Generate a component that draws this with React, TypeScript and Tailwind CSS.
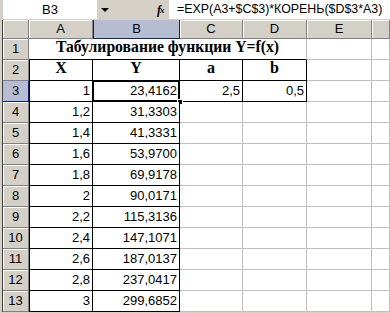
import React from 'react';

const rows: [string, string][] = [
  ['1', '23,4162'],
  ['1,2', '31,3303'],
  ['1,4', '41,3331'],
  ['1,6', '53,9700'],
  ['1,8', '69,9178'],
  ['2', '90,0171'],
  ['2,2', '115,3136'],
  ['2,4', '147,1071'],
  ['2,6', '187,0137'],
  ['2,8', '237,0417'],
  ['3', '299,6852'],
];

const sans = { fontFamily: '"Liberation Sans", Arial, sans-serif' };
const serif = { fontFamily: '"Liberation Serif", "Times New Roman", serif' };

const hdr = 'flex items-center justify-center bg-[#d4d0c8] border-r border-b border-[#808080] shadow-[inset_1px_1px_0_#fff] text-[13px] text-black';
const hdrSel = 'flex items-center justify-center bg-[#b6bdd2] border-r border-b border-[#0a246a] text-[13px] text-black';
const grid = 'border-r border-b border-[#c0c0c0] bg-white';
const num = 'flex items-end justify-end pr-[2px] pb-[1px] text-[13px] text-black bg-white';

export default function App() {
  return (
    <div className="w-[390px] h-[313px] overflow-hidden bg-[#d4d0c8]" style={sans}>
      {/* formula bar */}
      <div className="flex h-[20px] items-stretch pb-px">
        <div className="ml-[3px] w-[94px] bg-white flex items-center justify-center text-[13px]">B3</div>
        <div className="w-[15px] flex items-center justify-center">
          <span className="block w-0 h-0 border-l-[4px] border-r-[4px] border-t-[4px] border-l-transparent border-r-transparent border-t-black" />
        </div>
        <div className="w-[45px]" />
        <div className="w-[12px] flex items-center text-[12px] font-bold italic" style={serif}>
          f<span className="text-[9px] -ml-px mt-[3px]">x</span>
        </div>
        <div className="flex-1 bg-white flex items-center pl-[8px] text-[12.4px] whitespace-nowrap">
          =EXP(A3+$C$3)*КОРЕНЬ($D$3*A3)
        </div>
      </div>

      {/* sheet */}
      <div className="ml-[2px] border-l border-[#404040] grid grid-cols-[26px_64px_87px_63px_64px_65px_1fr] grid-rows-[19px_repeat(13,21px)] bg-white">
        {/* column headers */}
        <div className={hdr} />
        <div className={hdr}>A</div>
        <div className={hdrSel + ' border-l'}>B</div>
        <div className={hdr}>C</div>
        <div className={hdr}>D</div>
        <div className={hdr}>E</div>
        <div className={hdr} />

        {/* row 1 */}
        <div className={hdr}>1</div>
        <div className="col-span-4 flex items-end justify-center pb-0 border-b border-black border-r border-r-[#c0c0c0] bg-white text-[15.7px] font-bold whitespace-nowrap" style={serif}>
          Табулирование функции Y=f(x)
        </div>
        <div className={grid} />
        <div className={grid} />

        {/* row 2 */}
        <div className={hdr}>2</div>
        {['X', 'Y', 'a', 'b'].map((t, i) => (
          <div
            key={t}
            className={'flex items-end justify-center pb-0 border-r border-b border-black bg-white text-[16px] font-bold' + (i === 0 ? ' border-l' : '')}
            style={serif}
          >
            {t}
          </div>
        ))}
        <div className={grid} />
        <div className={grid} />

        {/* rows 3-13 */}
        {rows.map(([x, y], i) => {
          const r = i + 3;
          return (
            <React.Fragment key={r}>
              <div className={r === 3 ? hdrSel : hdr}>{r}</div>
              <div className={num + ' border-l border-r border-b border-black'}>{x}</div>
              <div className={num + ' relative border-r border-b border-black'}>
                {y}
                {r === 3 && (
                  <>
                    <div className="absolute -left-px -top-px -right-px -bottom-px border-2 border-black" />
                    <div className="absolute left-[1px] top-[1px] right-[1px] bottom-[1px] border border-white" />
                    <div className="absolute -right-[4px] -bottom-[4px] w-[6px] h-[6px] bg-black border border-white" />
                  </>
                )}
              </div>
              {r === 3 ? (
                <>
                  <div className={num + ' border-r border-b border-black'}>2,5</div>
                  <div className={num + ' border-r border-b border-black'}>0,5</div>
                </>
              ) : (
                <>
                  <div className={grid} />
                  <div className={grid} />
                </>
              )}
              <div className={grid} />
              <div className={grid} />
            </React.Fragment>
          );
        })}
      </div>
    </div>
  );
}
